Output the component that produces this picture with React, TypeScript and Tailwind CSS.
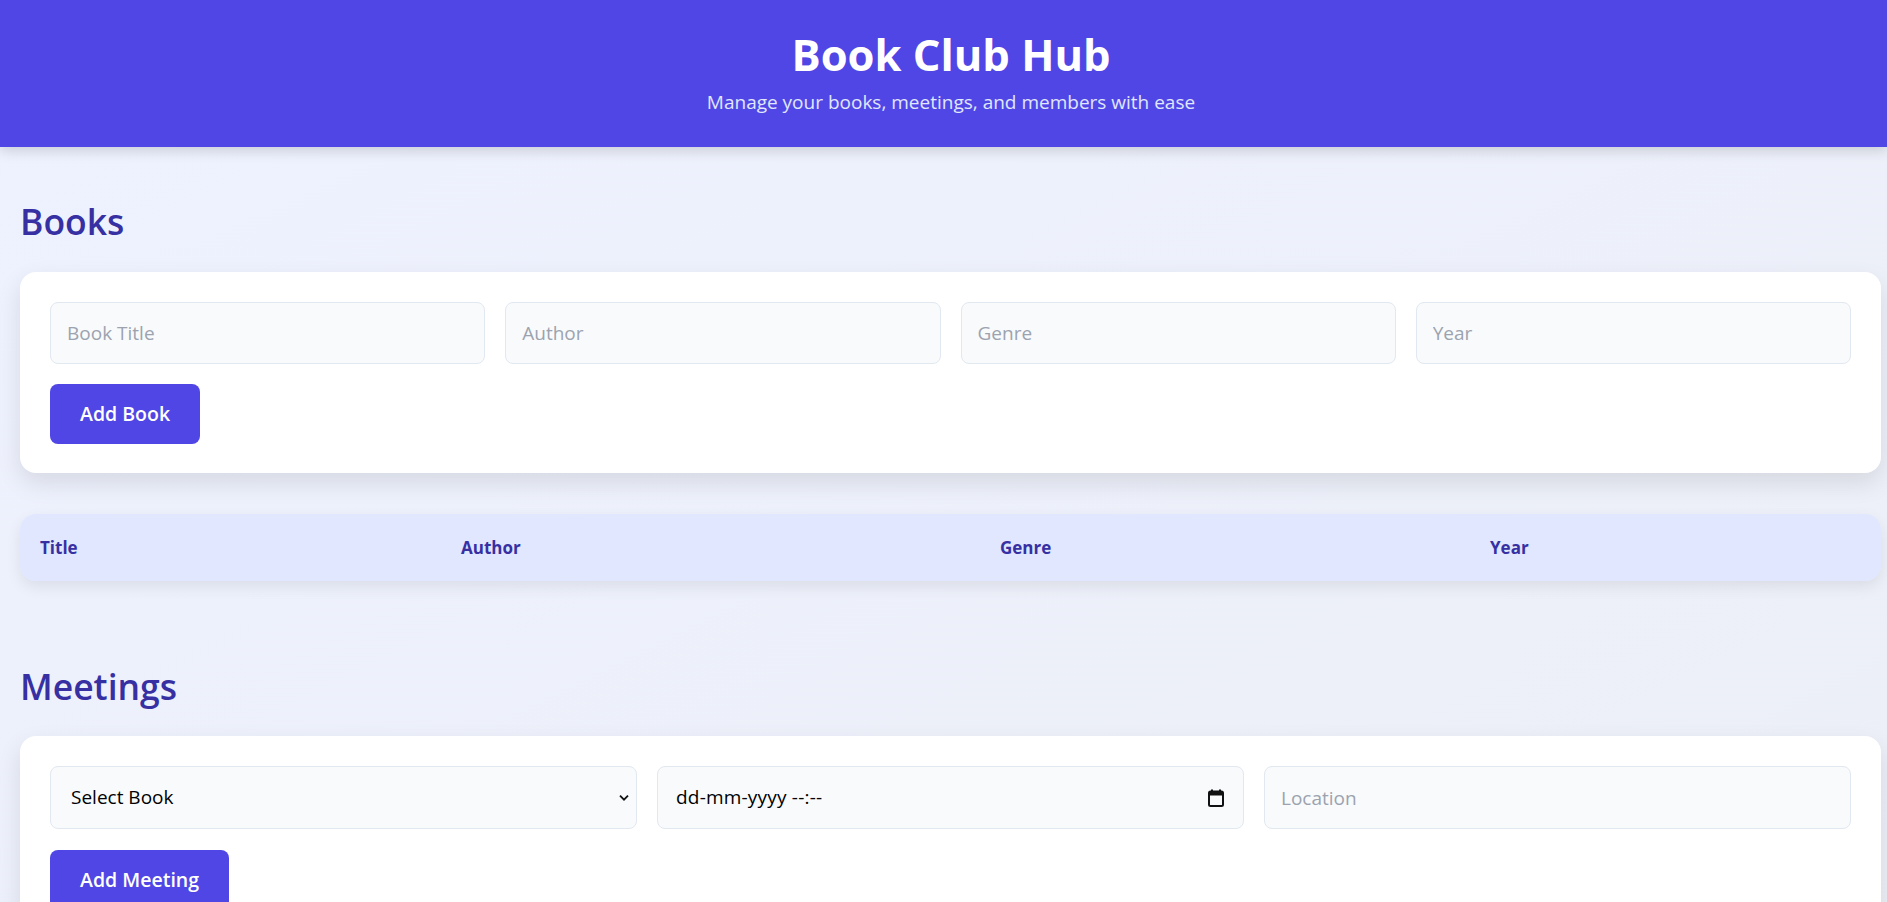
import React, { useState } from 'react';

const font = { fontFamily: '"Open Sans", "Noto Sans", sans-serif' };

const CalendarIcon = () => (
  <svg width="16" height="18" viewBox="0 0 16 18" className="shrink-0">
    <rect x="3" y="0.5" width="2" height="3" fill="#111" />
    <rect x="11" y="0.5" width="2" height="3" fill="#111" />
    <rect x="1" y="2.5" width="14" height="14.5" rx="1.5" fill="none" stroke="#111" strokeWidth="2" />
    <rect x="1" y="2.5" width="14" height="4" fill="#111" />
  </svg>
);

const Chevron = () => (
  <svg width="10" height="7" viewBox="0 0 10 7" className="pointer-events-none absolute right-[8px] top-1/2 -translate-y-1/2">
    <path d="M1 1.2l4 4 4-4" fill="none" stroke="#111" strokeWidth="1.8" />
  </svg>
);

const inputCls =
  'h-[62px] w-full rounded-lg border border-[#e2e8f0] bg-[#f8fafc] px-4 text-[19px] text-black outline-none placeholder:text-[#9ca3af]';

const Button = ({ children, className = 'mt-5' }: { children: React.ReactNode; className?: string }) => (
  <button className={`${className} h-[60px] rounded-lg bg-[#4f46e5] px-[30px] text-[19.5px] font-semibold text-white`}>
    {children}
  </button>
);

export default function App() {
  const [book, setBook] = useState('');

  return (
    <div style={font} className="min-h-screen bg-linear-to-br from-[#eef2ff] to-[#eceff6]">
      <header className="h-[147px] bg-[#4f46e5] pt-[26px] pl-[15px] text-center text-white shadow-[0_4px_12px_rgba(0,0,0,0.15)]">
        <h1 className="text-[43.5px] leading-[58px] font-bold">Book Club Hub</h1>
        <p className="mt-[4px] text-[19px] leading-[28px] text-[#e0e7ff]">
          Manage your books, meetings, and members with ease
        </p>
      </header>

      <main className="pt-[54px] pr-[6px] pl-5">
        <section>
          <h2 className="text-[35.5px] leading-[40px] font-semibold text-[#3730a3]">Books</h2>
          <div className="mt-[31px] rounded-2xl bg-white p-[30px] pb-[29px] shadow-[0_10px_25px_rgba(0,0,0,0.1)]">
            <div className="grid grid-cols-4 gap-5">
              <input className={inputCls} placeholder="Book Title" />
              <input className={inputCls} placeholder="Author" />
              <input className={inputCls} placeholder="Genre" />
              <input className={inputCls} placeholder="Year" />
            </div>
            <Button>Add Book</Button>
          </div>

          <div className="mt-[41px] overflow-hidden rounded-2xl shadow-[0_6px_15px_rgba(0,0,0,0.08)]">
            <table className="w-full table-fixed border-collapse">
              <thead>
                <tr className="h-[67px] bg-[#e0e7ff] text-left text-[17px] font-bold text-[#3730a3]">
                  <th className="w-[421px] px-5">Title</th>
                  <th className="w-[539px] px-5">Author</th>
                  <th className="w-[490px] px-5">Genre</th>
                  <th className="px-5">Year</th>
                </tr>
              </thead>
              <tbody></tbody>
            </table>
          </div>
        </section>

        <section className="mt-[85px]">
          <h2 className="text-[35.5px] leading-[40px] font-semibold text-[#3730a3]">Meetings</h2>
          <div className="mt-[30px] rounded-2xl bg-white p-[30px] shadow-[0_10px_25px_rgba(0,0,0,0.1)]">
            <div className="grid grid-cols-3 gap-5">
              <div className="relative">
                <select
                  value={book}
                  onChange={(e) => setBook(e.target.value)}
                  className={inputCls + ' h-[63px] appearance-none pl-5'}
                >
                  <option value="">Select Book</option>
                </select>
                <Chevron />
              </div>
              <div className="flex h-[63px] items-center justify-between rounded-lg border border-[#e2e8f0] bg-[#f8fafc] pr-[19px] pl-[18px] text-[19px] tracking-[0.2px] text-black">
                <span>dd-mm-yyyy --:--</span>
                <CalendarIcon />
              </div>
              <input className={inputCls + ' h-[63px]'} placeholder="Location" />
            </div>
            <Button className="mt-[21px]">Add Meeting</Button>
          </div>
        </section>
      </main>
    </div>
  );
}
